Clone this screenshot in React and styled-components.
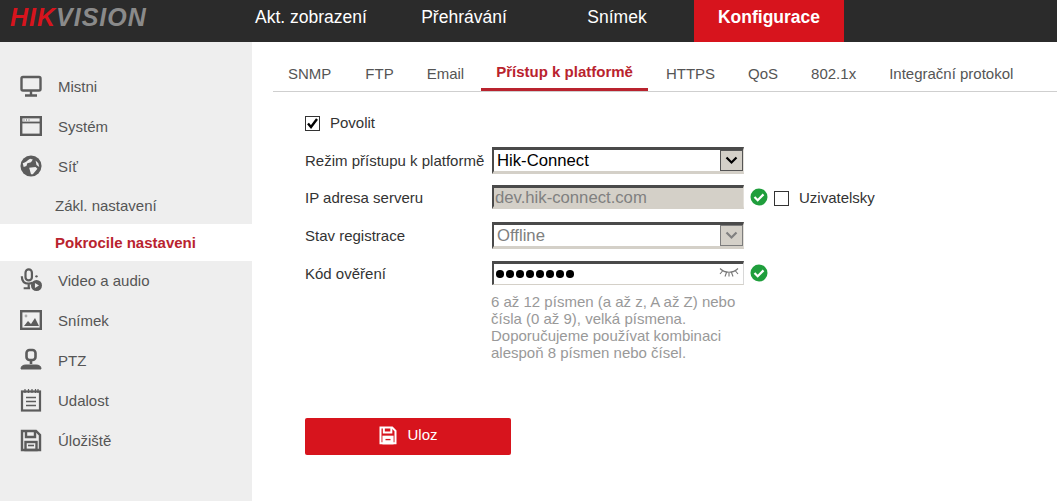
import React from 'react';
import styled, { createGlobalStyle } from 'styled-components';

const Global = createGlobalStyle`
html, body {
  margin: 0;
  padding: 0;
  background: #fff;
  font-family: "Liberation Sans", Arial, sans-serif;
  overflow: hidden;
}
`

const Page = styled.div`
width: 1057px;
height: 501px;
display: flex;
flex-direction: column;
overflow: hidden;
`

const Header = styled.header`
height: 42px;
flex: none;
display: flex;
background: #2b2b2b;
`

const LogoBox = styled.div`
width: 236px;
flex: none;
padding: 4px 0 0 10px;
box-sizing: border-box;
font-size: 25px;
line-height: 26px;
font-weight: bold;
font-style: italic;
letter-spacing: 1px;
white-space: nowrap;
`

const LogoRed = styled.span`
color: #d7141d;
`

const LogoGrey = styled.span`
color: #8a8a8a;
`

const TopNav = styled.nav`
display: flex;
gap: 3px;
height: 42px;
`

const TopItem = styled.div`
width: 150px;
margin-left: ${props => props.active ? '-1px' : '0'};
display: flex;
align-items: center;
justify-content: center;
padding-bottom: 8px;
box-sizing: border-box;
font-size: 17.5px;
color: #fff;
font-weight: ${props => props.active ? 'bold' : 'normal'};
background: ${props => props.active ? '#d7141d' : 'transparent'};
`

const Body = styled.div`
flex: 1;
display: flex;
min-height: 0;
`

const Sidebar = styled.aside`
width: 252px;
flex: none;
background: #eeeeee;
padding-top: 25px;
box-sizing: border-box;
`

const SideItem = styled.div`
height: 40px;
box-sizing: border-box;
display: flex;
align-items: center;
padding: 0 0 2px 20px;
font-size: 15px;
color: #555;
svg { flex: none; width: 22px; height: 24px; margin-right: 16px; }
`

const SubItem = styled.div`
height: ${props => props.active ? 37 : 38}px;
margin-top: ${props => props.active ? '0' : '-1px'};
display: flex;
align-items: center;
padding-left: 55px;
font-size: 15px;
color: ${props => props.active ? '#b9232e' : '#555'};
font-weight: ${props => props.active ? 'bold' : 'normal'};
background: ${props => props.active ? '#fff' : 'transparent'};
`

const Main = styled.main`
flex: 1;
padding-left: 21px;
min-width: 0;
`

const Tabs = styled.div`
height: 50px;
display: flex;
border-bottom: 1px solid #cfcfcf;
box-sizing: border-box;
`

const Tab = styled.div`
margin-left: ${props => props.gap}px;
padding: ${props => props.active ? '21px 15px 0' : '23px 0 0'};
height: 49px;
box-sizing: border-box;
font-size: 15px;
line-height: 17px;
white-space: nowrap;
color: ${props => props.active ? '#b9232e' : '#555'};
font-weight: ${props => props.active ? 'bold' : 'normal'};
border-bottom: ${props => props.active ? '3px solid #b9232e' : 'none'};
`

const Form = styled.div`
padding: 21px 0 0 32px;
`

const EnableRow = styled.label`
display: flex;
align-items: center;
height: 19px;
font-size: 15px;
color: #333;
margin-bottom: 15px;
`

const CheckBox = styled.span`
width: 15px;
height: 15px;
box-sizing: border-box;
flex: none;
border: 1px solid #333;
background: #fff;
display: flex;
align-items: center;
justify-content: center;
margin: 2px 10px 0 0;
svg { width: 13px; height: 13px; }
`

const Row = styled.div`
display: flex;
align-items: center;
height: ${props => props.h}px;
margin-bottom: ${props => props.mb}px;
font-size: 15px;
color: #333;
`

const Label = styled.div`
width: 187px;
flex: none;
`

const Field = styled.div`
width: 252px;
height: 100%;
box-sizing: border-box;
flex: none;
display: flex;
align-items: center;
border-style: solid;
border-width: 3px 1px 3px 2px;
border-color: #4a4a4a #e3e0da #d4d0c8 #4a4a4a;
background: ${props => props.filled ? '#d4d0c8' : '#fff'};
color: ${props => props.muted ? '#808080' : '#000'};
font-size: 16.7px;
padding-left: ${props => props.pad}px;
padding-top: ${props => props.filled ? '1px' : '0'};
position: relative;
`

const PasswordField = styled(Field)`
border-width: 3px 1px 1px 2px;
border-color: #4a4a4a #d8d8d8 #d4d0c8 #4a4a4a;
`

const FieldText = styled.span`
flex: 1;
`

const ArrowBox = styled.span`
width: 23px;
height: 21px;
box-sizing: border-box;
flex: none;
display: flex;
align-items: center;
justify-content: center;
background: #d4d0c8;
border: 1px solid ${props => props.muted ? '#7d7d7d' : '#555'};
svg { width: 13px; height: 9px; }
`

const Dots = styled.span`
flex: 1;
display: flex;
gap: 2.500px;
`

const Dot = styled.i`
width: 7.500px;
height: 7.500px;
border-radius: 50%;
background: #000;
`

const EyeIcon = styled.svg`
position: absolute;
right: 4px;
top: 3px;
width: 20px;
height: 10px;
`

const OkIcon = styled.svg`
width: 18px;
height: 18px;
margin-left: ${props => props.ml}px;
flex: none;
`

const SmallCheck = styled.span`
width: 15px;
height: 15px;
box-sizing: border-box;
border: 1px solid #333;
background: #fff;
margin: 2px 10px 0 6px;
flex: none;
`

const Hint = styled.div`
margin: 0 0 0 186px;
width: 258px;
font-size: 15px;
line-height: 17px;
color: #999;
`

const SaveButton = styled.button`
display: flex;
align-items: center;
justify-content: center;
gap: 9px;
width: 206px;
height: 37px;
margin-top: 57px;
padding: 0 0 4px;
border: 0;
border-radius: 2px;
background: #d7141d;
color: #fff;
font-family: inherit;
font-size: 15px;
`

const monitor = <svg viewBox="0 0 22 24" fill="none" stroke="#5c5c5c" strokeWidth="2.400"><rect x="1.500" y="3" width="19" height="13.500" rx="1.500"/><path d="M11 17v4M5 21.500h12" /></svg>
const windowIcon = <svg viewBox="0 0 22 24" fill="none" stroke="#5c5c5c" strokeWidth="2.400"><rect x="1.200" y="3.200" width="19.600" height="17.600"/><path d="M1 8.500h20" strokeWidth="1.800"/><path d="M3.500 6h1M6 6h1M8.500 6h1" strokeWidth="1"/></svg>
const globe = <svg viewBox="0 0 24 24"><circle cx="12" cy="12" r="11.500" fill="#5c5c5c"/><path d="M3 9c3-1 5-3 8-5l3 1-2 3-4 1-1 3-3 1zM10 14l7-1 2 2-5 6-2 0zM17 6l3 3 1 4-3-2z" fill="#eee"/></svg>
const videoIcon = <svg viewBox="0 0 24 26" fill="none" stroke="#5c5c5c" strokeWidth="2.400"><rect x="6" y="1.500" width="7" height="12" rx="3.500"/><path d="M2 9c0 6 3 8 7.500 8 2 0 3-.5 4-1M9.500 17v4M4 22h7" /><circle cx="18" cy="19" r="6" fill="#5c5c5c" stroke="none"/><path d="M16.300 16.200l4.400 2.800-4.400 2.800z" fill="#eee" stroke="none"/><circle cx="18" cy="9" r="1.300" fill="#5c5c5c" stroke="none"/></svg>
const imageIcon = <svg viewBox="0 0 22 24" fill="none" stroke="#5c5c5c" strokeWidth="2.400"><rect x="1.200" y="3.200" width="19.600" height="17.600"/><path d="M4 18l4-5 3 3 4-6 4 8z" fill="#5c5c5c" stroke="none"/><circle cx="6" cy="8" r="1.400" fill="#aaa" stroke="none"/></svg>
const ptzIcon = <svg viewBox="0 0 22 24" fill="none" stroke="#5c5c5c" strokeWidth="2.600"><rect x="6.500" y="2" width="9" height="10" rx="3"/><path d="M11 12v4" /><path d="M1 21c0-3 2-4 5-4h10c3 0 5 1 5 4z" fill="#5c5c5c" strokeWidth="1"/></svg>
const eventIcon = <svg viewBox="0 0 22 24" fill="none" stroke="#5c5c5c" strokeWidth="2.200"><rect x="2" y="3.500" width="18" height="19"/><path d="M6 9.500h10M6 13.500h10M6 17.500h10" strokeWidth="1.600"/><path d="M5 1v4M8.500 1v4M12 1v4M15.500 1v4M18 1v4" strokeWidth="1.200"/></svg>
const FloppyPath = ({ color, bg, hole }) => (
  <g fill="none" stroke={color} strokeWidth="2.400">
    <path d="M2 3h14l4 4v15H2z" />
    <path d="M6 3v6h9V3" />
    <rect x="5.500" y="14" width="11" height="8" fill={bg} />
    <path d="M8 17.500h6" stroke={hole || color} strokeWidth="1.600" />
  </g>
)
const floppy = <svg viewBox="0 0 22 24"><FloppyPath color="#5c5c5c" bg="none" /></svg>

const okIcon = ml => (
  <OkIcon ml={ml} viewBox="0 0 18 18">
    <circle cx="9" cy="9" r="8.500" fill="#1f9e3c" />
    <path d="M4.500 9l3.200 3.200 5.800-5.800" fill="none" stroke="#fff" strokeWidth="2.200" />
  </OkIcon>
)

const chevron = color => (
  <svg viewBox="0 0 13 9"><path d="M1.500 1.500l5 5 5-5" fill="none" stroke={color} strokeWidth="2.200" /></svg>
)

const tabs = [
  { name: 'SNMP', gap: 15 },
  { name: 'FTP', gap: 34 },
  { name: 'Email', gap: 33 },
  { name: 'Přístup k platformě', gap: 17, active: true },
  { name: 'HTTPS', gap: 18 },
  { name: 'QoS', gap: 33 },
  { name: '802.1x', gap: 33 },
  { name: 'Integrační protokol', gap: 33 },
]

function App() {
  return (
    <Page>
      <Global />
      <Header>
        <LogoBox>
          <LogoRed>HIK</LogoRed><LogoGrey>VISION</LogoGrey>
        </LogoBox>
        <TopNav>
          <TopItem>Akt. zobrazení</TopItem>
          <TopItem>Přehrávání</TopItem>
          <TopItem>Snímek</TopItem>
          <TopItem active>Konfigurace</TopItem>
        </TopNav>
      </Header>
      <Body>
        <Sidebar>
          <SideItem>{monitor}Mistni</SideItem>
          <SideItem>{windowIcon}Systém</SideItem>
          <SideItem>{globe}Síť</SideItem>
          <SubItem>Zákl. nastavení</SubItem>
          <SubItem active>Pokrocile nastaveni</SubItem>
          <SideItem>{videoIcon}Video a audio</SideItem>
          <SideItem>{imageIcon}Snímek</SideItem>
          <SideItem>{ptzIcon}PTZ</SideItem>
          <SideItem>{eventIcon}Udalost</SideItem>
          <SideItem>{floppy}Úložiště</SideItem>
        </Sidebar>
        <Main>
          <Tabs>
            {tabs.map(t => (
              <Tab key={t.name} gap={t.gap} active={t.active}>{t.name}</Tab>
            ))}
          </Tabs>
          <Form>
            <EnableRow>
              <CheckBox>
                <svg viewBox="0 0 13 13"><path d="M2 6.500l3 3.500 6-8" fill="none" stroke="#000" strokeWidth="2.400" /></svg>
              </CheckBox>
              Povolit
            </EnableRow>
            <Row h={27} mb={11}>
              <Label>Režim přístupu k platformě</Label>
              <Field pad={3}><FieldText>Hik-Connect</FieldText><ArrowBox>{chevron('#000')}</ArrowBox></Field>
            </Row>
            <Row h={24} mb={13}>
              <Label>IP adresa serveru</Label>
              <Field filled muted pad={1}><FieldText>dev.hik-connect.com</FieldText></Field>
              {okIcon(6)}
              <SmallCheck />
              Uzivatelsky
            </Row>
            <Row h={27} mb={12}>
              <Label>Stav registrace</Label>
              <Field muted pad={3}><FieldText>Offline</FieldText><ArrowBox muted>{chevron('#808080')}</ArrowBox></Field>
            </Row>
            <Row h={24} mb={8}>
              <Label>Kód ověření</Label>
              <PasswordField pad={2}>
                <Dots>{[0, 1, 2, 3, 4, 5, 6, 7].map(i => <Dot key={i} />)}</Dots>
                <EyeIcon viewBox="0 0 20 10" fill="none" stroke="#777" strokeWidth="1.100">
                  <path d="M1 1.500c5 5 13 5 18 0M3.500 4L1 7M7.500 5.500L6 9.500M12.500 5.500l1.500 4M16.500 4L19 7M10 6v3.500" />
                </EyeIcon>
              </PasswordField>
              {okIcon(6)}
            </Row>
            <Hint>6 až 12 písmen (a až z, A až Z) nebo čísla (0 až 9), velká písmena. Doporučujeme používat kombinaci alespoň 8 písmen nebo čísel.</Hint>
            <SaveButton>
              <svg width="20" height="20" viewBox="0 0 22 24"><FloppyPath color="#fff" bg="#fff" hole="#d7141d" /></svg>
              Uloz
            </SaveButton>
          </Form>
        </Main>
      </Body>
    </Page>
  );
}

export default App;
